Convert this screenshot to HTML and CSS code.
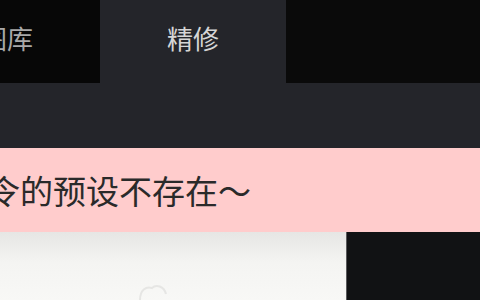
FILE: index.html
```html
<!DOCTYPE html>
<html lang="zh-CN">
<head>
    <meta charset="UTF-8">
    <meta name="viewport" content="width=device-width, initial-scale=1.0">
    <title>精修</title>
    <link rel="stylesheet" href="styles.css">
</head>
<body>
    <div class="screen">
        <div class="tabs">
            <div class="tab">图库</div>
            <div class="tab active">精修</div>
            <div class="tab-rest"></div>
        </div>

        <div class="toolbar"></div>

        <div class="notice">
            <span class="notice-text">指令的预设不存在～</span>
        </div>

        <div class="content">
            <div class="preview">
                <svg class="sketch" width="346" height="68" viewBox="0 0 346 68">
                    <path d="M140 68 C140 58 146 54 152 56 C156 52 164 54 166 62" fill="none" stroke="#e6e6e4" stroke-width="2"/>
                </svg>
            </div>
            <div class="side-panel"></div>
        </div>
    </div>
</body>
</html>
```

FILE: styles.css
```css
body {
    margin: 0;
    background: #24252a;
    font-family: "Noto Sans CJK SC", "Noto Sans", sans-serif;
    overflow: hidden;
}

.screen {
    width: 480px;
    height: 300px;
    overflow: hidden;
    display: flex;
    flex-direction: column;
}

.tabs {
    display: flex;
    height: 83px;
    margin-left: -86px;
    flex-shrink: 0;
}

.tab {
    width: 186px;
    flex-shrink: 0;
    background: #070707;
    color: #a9a9a9;
    font-size: 26px;
    display: flex;
    justify-content: center;
    align-items: center;
    padding-bottom: 8px;
    box-sizing: border-box;
}

.tab.active {
    background: #24252a;
    color: #d6d6d6;
}

.tab-rest {
    flex: 1;
    background: #0a0a0a;
}

.toolbar {
    height: 65px;
    background: #24252a;
    flex-shrink: 0;
}

.notice {
    height: 84px;
    background: #ffcccc;
    display: flex;
    align-items: center;
    flex-shrink: 0;
}

.notice-text {
    margin-left: -46px;
    font-size: 33px;
    color: #2a2a2a;
    white-space: nowrap;
}

.content {
    flex: 1;
    display: flex;
}

.preview {
    width: 346px;
    background: linear-gradient(180deg, #e6e6e4 0%, #f4f4f2 45%, #f8f8f6 100%);
    display: flex;
    align-items: flex-end;
}

.sketch {
    display: block;
}

.side-panel {
    flex: 1;
    background: #111214;
    border-left: 1px solid #5a5a5c;
}
```
